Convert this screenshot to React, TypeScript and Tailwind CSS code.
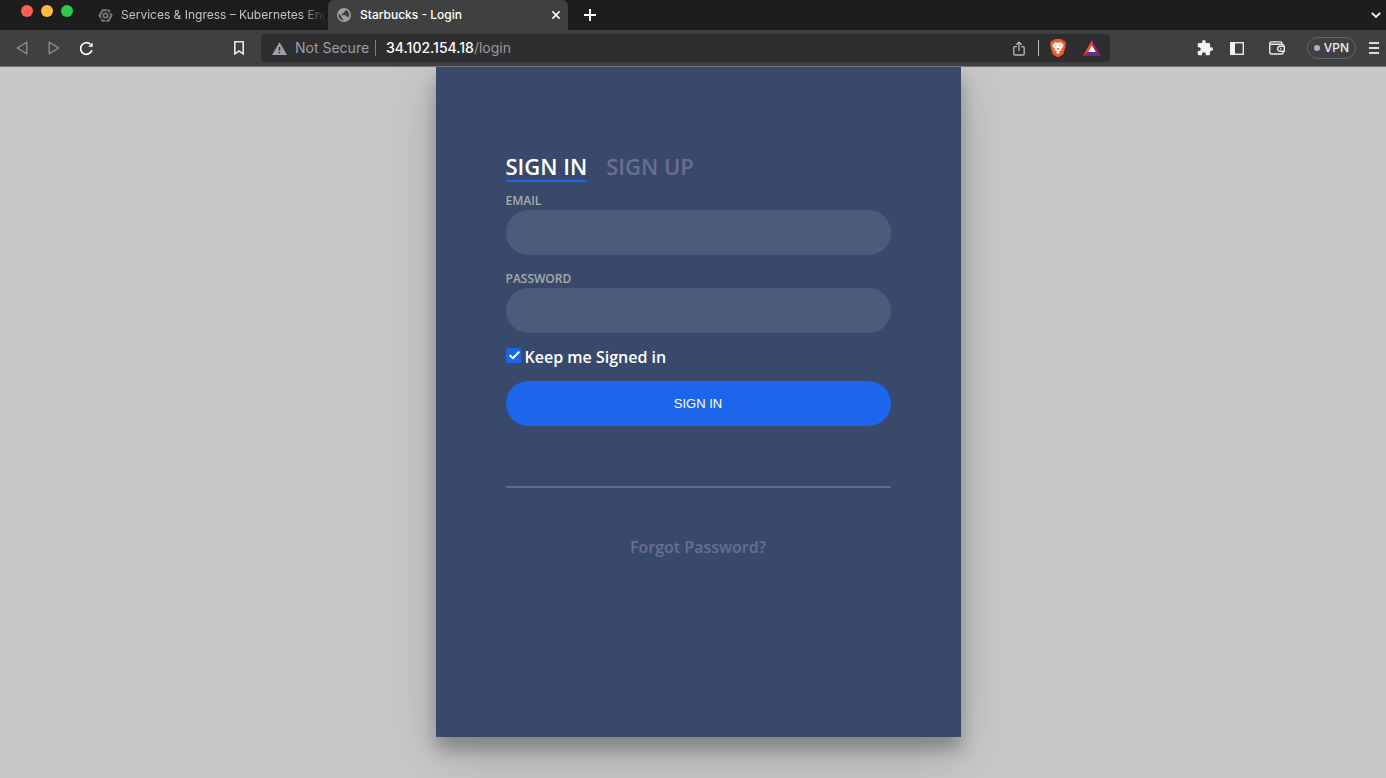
import type { ReactNode } from "react";

function IconButton({ label, children, className = "" }: { label: string; children: ReactNode; className?: string }) {
  return (
    <button type="button" aria-label={label} className={`flex shrink-0 items-center justify-center ${className}`}>
      {children}
    </button>
  );
}

function TabStrip() {
  return (
    <div className="flex h-[30px] items-stretch bg-[#1d1d1d] text-xs">
      <div className="flex w-[98px] shrink-0 items-start gap-2 pt-[5px] pl-[21px]">
        <IconButton label="Close window" className="size-3 rounded-full bg-[#ff5f57]">{null}</IconButton>
        <IconButton label="Minimize window" className="size-3 rounded-full bg-[#febc40]">{null}</IconButton>
        <IconButton label="Zoom window" className="size-3 rounded-full bg-[#33c748]">{null}</IconButton>
      </div>
      <a href="#services" className="flex w-[230px] shrink-0 items-center gap-2 text-[#c4c4c4]">
        <svg viewBox="0 0 15 15" className="size-[15px] shrink-0" fill="none" stroke="#77797c" strokeWidth="2">
          <path d="M8.800 2.200H4.600L1.500 7.500 3 10.200M3.700 11.300 4.600 12.800H7.200" />
          <path d="M8.300 12.800H10.400L13.500 7.500 12.200 5.200M11.600 4.200 10.400 2.200H9.600" />
          <circle cx="7.500" cy="7.500" r="2.200" strokeWidth="1.700" />
        </svg>
        <span className="min-w-0 flex-1 overflow-hidden whitespace-nowrap [mask-image:linear-gradient(to_right,black_180px,transparent_205px)]">
          Services &amp; Ingress – Kubernetes Engine
        </span>
      </a>
      <div className="flex w-60 shrink-0 items-center rounded-t-md bg-[#404040] pr-[7px] pl-[9px] text-white">
        <svg viewBox="0 0 14 14" className="mr-[9px] size-[14px] shrink-0">
          <circle cx="7" cy="7" r="7" fill="#9aa0a6" />
          <path d="M8.600 1.700C8.900 3 8.300 3.600 7 3.700V5.100H5.600V6.500H4.200V7.200H7.700C8.500 7.200 8.900 7.700 8.900 8.600H10.300C10.900 8.600 11.300 9 11.500 9.600A5.500 5.500 0 0 0 8.600 1.700ZM1.700 5.800A5.500 5.500 0 0 0 6.300 12.500V11.200C5.500 11.200 4.900 10.600 4.900 9.800V9.100Z" fill="#404040" />
        </svg>
        <span className="flex-1 font-medium whitespace-nowrap">Starbucks - Login</span>
        <IconButton label="Close tab" className="size-[10px]">
          <svg viewBox="0 0 10 10" className="size-[10px]" stroke="#fff" strokeWidth="1.5">
            <path d="M1.4 1.4 8.6 8.6M8.6 1.4 1.4 8.6" />
          </svg>
        </IconButton>
      </div>
      <IconButton label="New tab" className="ml-4 w-3">
        <svg viewBox="0 0 12 12" className="size-3" stroke="#fff" strokeWidth="2">
          <path d="M6 0V12M0 6H12" />
        </svg>
      </IconButton>
      <IconButton label="Search tabs" className="mr-[5px] ml-auto w-[10px]">
        <svg viewBox="0 0 10 6" className="h-[6px] w-[10px]" fill="none" stroke="#f2f2f2" strokeWidth="1.8">
          <path d="M.8 .8 5 5 9.2 .8" />
        </svg>
      </IconButton>
    </div>
  );
}

function AddressBar() {
  return (
    <div className="flex h-7 min-w-0 flex-1 items-center rounded bg-[#2e2e30] pr-[9px] pl-[11px] text-sm">
      <svg viewBox="0 0 15 13" className="mr-2 h-[13px] w-[15px] shrink-0">
        <path d="M7.5 0 15 13H0Z" fill="#9aa0a6" />
        <path d="M6.8 5H8.2V8.6H6.8ZM6.8 9.8H8.2V11.2H6.8Z" fill="#2e2e30" />
      </svg>
      <span className="whitespace-nowrap text-[#9aa0a6]">Not Secure</span>
      <span className="mr-[10px] ml-[6px] h-4 w-px shrink-0 bg-[#7c8084]" />
      <span className="flex-1 whitespace-nowrap text-[#9a9a9c]">
        <span className="font-medium text-white">34.102.154.18</span>/login
      </span>
      <IconButton label="Share" className="mr-[13px]">
        <svg viewBox="0 0 12 15" className="h-[15px] w-3" fill="none" stroke="#b4b6b9" strokeWidth="1.3">
          <path d="M3.8 5.6H1.9Q.8 5.6 .8 6.7V12.9Q.8 14 1.9 14H10.1Q11.2 14 11.2 12.9V6.7Q11.2 5.6 10.1 5.6H8.2M6 10V1.2M3.3 3.8 6 1.1 8.7 3.8" />
        </svg>
      </IconButton>
      <span className="mr-[11px] h-4 w-px shrink-0 bg-[#c0c0c2]" />
      <IconButton label="Brave Shields" className="mr-[17px]">
        <svg viewBox="0 0 16 18" className="h-[18px] w-4">
          <path d="M4.6 0H11.4L13 1.8 14.6 1.7 15.9 4.3 15.4 5.8 15.7 7 13.7 14Q13.3 15.1 12.2 15.9L8.8 18H7.2L3.8 15.9Q2.7 15.1 2.3 14L.3 7 .6 5.8 .1 4.3 1.4 1.7 3 1.8Z" fill="#fb5425" />
          <path d="M5 3.200 8 3.800 11 3.200 13.600 5.900 12.900 8 11.300 10 11.600 11.300 9.600 11.900 8 13 6.400 11.900 4.400 11.300 4.700 10 3.100 8 2.400 5.900Z" fill="#fff" />
          <path d="M4.300 6.300 6.700 6.500 6.200 7.500ZM11.700 6.300 9.300 6.500 9.800 7.500ZM6.200 10 7.200 9.200 8 9.600 8.800 9.200 9.800 10 8 11Z" fill="#fb5425" />
          <path d="M5.800 13.200 8 12.200 10.200 13.200 8 15Z" fill="#fff" />
        </svg>
      </IconButton>
      <IconButton label="Brave Rewards">
        <svg viewBox="0 0 18 16" className="h-4 w-[18px]">
          <path d="M9 0V5.8L5.6 12 0 16Z" fill="#ff4724" />
          <path d="M9 0 18 16 12.4 12 9 5.8Z" fill="#9e1f63" />
          <path d="M0 16 5.6 12H12.4L18 16Z" fill="#662d91" />
          <path d="M9 5.2 12.8 12H5.2Z" fill="#fff" />
        </svg>
      </IconButton>
    </div>
  );
}

function Toolbar() {
  return (
    <div className="flex h-[37px] items-center border-b border-[#747474] bg-[#404040] pr-[7px] pl-4">
      <IconButton label="Back" className="mr-5">
        <svg viewBox="0 0 12 14" className="h-[14px] w-3" fill="none" stroke="#929292" strokeWidth="1.3" strokeLinejoin="round">
          <path d="M10.8 1.2V12.8L1.2 7Z" />
        </svg>
      </IconButton>
      <IconButton label="Forward" className="mr-[19px]">
        <svg viewBox="0 0 12 14" className="h-[14px] w-3" fill="none" stroke="#929292" strokeWidth="1.3" strokeLinejoin="round">
          <path d="M1.2 1.2V12.8L10.8 7Z" />
        </svg>
      </IconButton>
      <IconButton label="Reload">
        <svg viewBox="0 0 15 15" className="size-[15px]" fill="none" stroke="#fff" strokeWidth="1.7">
          <path d="M11.300 3.200A5.800 5.800 0 1 0 12.900 9.300" />
          <path d="M13.600 1.500V5.700H9.400Z" fill="#fff" stroke="none" />
        </svg>
      </IconButton>
      <IconButton label="Bookmark this page" className="mr-[17px] ml-[140px]">
        <svg viewBox="0 0 10 14" className="h-[14px] w-[10px]" fill="none" stroke="#e8e8e8" strokeWidth="1.6">
          <path d="M.8 .8H9.2V12.8L5 10 .8 12.8Z" />
        </svg>
      </IconButton>
      <AddressBar />
      <IconButton label="Extensions" className="mr-[17px] ml-[87px]">
        <svg viewBox="1 1 22 22" className="size-4" fill="#f2f2f2">
          <path d="M20.5 11H19V7c0-1.1-.9-2-2-2h-4V3.500a2.500 2.500 0 0 0-5 0V5H4c-1.100 0-1.990.9-1.990 2v3.800H3.500c1.490 0 2.700 1.210 2.700 2.700s-1.210 2.700-2.700 2.700H2V20c0 1.100.9 2 2 2h3.800v-1.500c0-1.490 1.210-2.700 2.700-2.700s2.700 1.210 2.700 2.700V22H17c1.100 0 2-.9 2-2v-4h1.500a2.500 2.500 0 0 0 0-5Z" />
        </svg>
      </IconButton>
      <IconButton label="Side panel" className="mr-[25px]">
        <svg viewBox="0 0 14 13" className="h-[13px] w-[14px]">
          <rect x=".7" y=".7" width="12.6" height="11.6" fill="none" stroke="#e8e8e8" strokeWidth="1.4" />
          <path d="M0 0H5V13H0Z" fill="#f2f2f2" />
        </svg>
      </IconButton>
      <IconButton label="Wallet" className="mr-[22px]">
        <svg viewBox="0 0 16 14" className="h-[14px] w-4" fill="none" stroke="#e8e8e8" strokeWidth="1.4">
          <path d="M14.200 5V4.300Q14.200 3.300 13.200 3.300H2.500Q.8 3.300 .8 2.300 .8 .9 2.500 .9H11.500Q13 .9 13 2.300V3.300M.8 2.300V11.200Q.8 13 2.600 13H12.400Q14.200 13 14.200 11.200V10.500" />
          <path d="M15.300 5.300H11Q8.600 5.600 8.600 7.800T11 10.300H15.300Z" />
          <path d="M11 7.800H12.300" />
        </svg>
      </IconButton>
      <button type="button" className="mr-3 flex h-[22px] w-[49px] shrink-0 items-center justify-center gap-1 rounded-full border border-[#626479] text-xs font-medium text-[#ededfa]">
        <span className="size-[6px] rounded-full bg-[#aeb1c9]" />
        VPN
      </button>
      <IconButton label="Menu" className="w-[11px] flex-col gap-[3px]">
        <span className="h-[2px] w-[10px] bg-[#dedede]" />
        <span className="h-[2px] w-[10px] bg-[#dedede]" />
        <span className="h-[2px] w-[10px] bg-[#dedede]" />
      </IconButton>
    </div>
  );
}

function Field({ id, label, type }: { id: string; label: string; type: string }) {
  return (
    <div className="mb-[15px]">
      <label htmlFor={id} className="block text-xs leading-[18px] text-[#aaaaaa] uppercase">
        {label}
      </label>
      <input id={id} type={type} className="block h-[45px] w-full rounded-[25px] bg-white/10 px-5 text-white outline-none" />
    </div>
  );
}

function LoginCard() {
  return (
    <main className="mx-auto min-h-[670px] w-full max-w-[525px] bg-[#39496c] px-[70px] pt-[90px] pb-[50px] font-['Open_Sans',sans-serif] text-base leading-[18px] font-semibold text-[#6a6f8c] shadow-[0_12px_15px_0_rgba(0,0,0,0.24),0_17px_50px_0_rgba(0,0,0,0.19)]">
      <div className="mb-[10px] flex gap-[19px] text-[22px] leading-[18px]">
        <button type="button" className="border-b-2 border-[#1d66ec] pb-[5px] text-white">SIGN IN</button>
        <button type="button" className="border-b-2 border-transparent pb-[5px]">SIGN UP</button>
      </div>
      <form onSubmit={(event) => event.preventDefault()}>
        <Field id="email" label="Email" type="text" />
        <Field id="password" label="Password" type="password" />
        <div className="mb-[15px] flex gap-1">
          <span className="relative size-[15px] shrink-0">
            <input id="keep" type="checkbox" defaultChecked className="peer block size-[15px] appearance-none rounded-[2px] bg-white/10 checked:bg-[#1d66ec]" />
            <svg viewBox="0 0 15 15" className="pointer-events-none absolute inset-0 hidden size-[15px] peer-checked:block" fill="none" stroke="#fff" strokeWidth="2">
              <path d="M3.700 7.200 7 10.200 13.300 3.600" />
            </svg>
          </span>
          <label htmlFor="keep" className="text-white">Keep me Signed in</label>
        </div>
        <button type="submit" className="h-[45px] w-full rounded-[25px] bg-[#1d66ec] font-['Liberation_Sans',Arial,sans-serif] text-[13px] font-normal text-white">
          SIGN IN
        </button>
      </form>
      <hr className="mt-[60px] mb-[50px] h-[2px] border-0 bg-white/20" />
      <div className="text-center">
        <a href="#forgot">Forgot Password?</a>
      </div>
    </main>
  );
}

export default function App() {
  return (
    <div className="min-h-screen bg-[#c8c8c8]">
      <header className="relative z-10 font-[Inter,sans-serif]">
        <TabStrip />
        <Toolbar />
      </header>
      <div className="overflow-hidden pb-[41px] pl-[10px]">
        <LoginCard />
      </div>
    </div>
  );
}
